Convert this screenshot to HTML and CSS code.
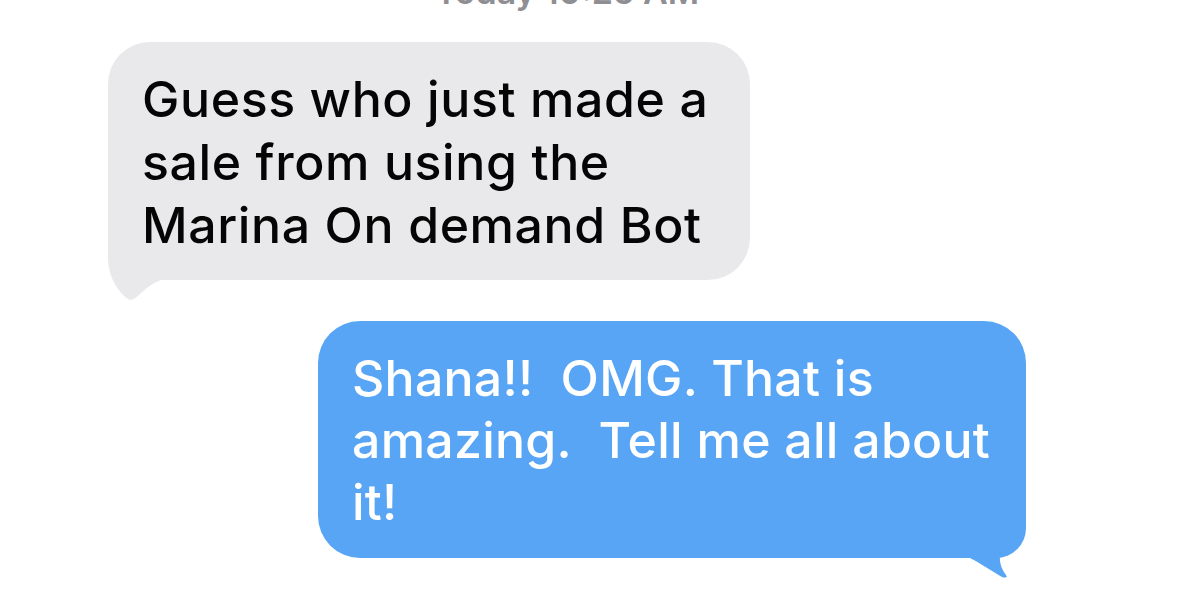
FILE: index.html
```html
<!DOCTYPE html>
<html>
<head>
<meta charset="utf-8">
<link rel="stylesheet" href="styles.css">
</head>
<body>
<div class="thread">
  <div class="stamp">Today 10:25 AM</div>
  <div class="bubble in">
    <svg class="tail tail-in" width="70" height="82" viewBox="0 0 70 82"><path d="M0 8 L0 38 C1 56 10 70 20 77 C23 79 26 77 30 74 C38 66 46 60 58 56 L58 8 Z" fill="#e9e9eb"/></svg>
    <p class="text">Guess who just made a<br>sale from using the<br>Marina On demand Bot</p>
  </div>
  <div class="bubble out">
    <svg class="tail tail-out" width="72" height="80" viewBox="0 0 72 80"><path d="M68 0 L68 22 C68 36 58 43 47 47 C40 51 40 64 48 74 C50 77 47 77 44 76 C34 70 22 62 12 57 L12 0 Z" fill="#57a5f4"/></svg>
    <p class="text">Shana!!  OMG. That is<br>amazing.  Tell me all about<br>it!</p>
  </div>
</div>
</body>
</html>
```
FILE: styles.css
```css
html, body {
  margin: 0;
  padding: 0;
  background: #ffffff;
}
body {
  width: 1200px;
  height: 597px;
  overflow: hidden;
  font-family: Inter, "Liberation Sans", Arial, sans-serif;
}
.thread {
  display: flex;
  flex-direction: column;
  align-items: flex-start;
}
.stamp {
  align-self: stretch;
  text-align: center;
  font-size: 34px;
  line-height: 34px;
  font-weight: 600;
  color: #8e8e93;
  margin-top: -25px;
  padding-right: 66px;
  height: 34px;
}
.bubble {
  position: relative;
  box-sizing: border-box;
  border-radius: 42px;
  padding: 26px 0 0 34px;
}
.bubble.in {
  background: #e9e9eb;
  color: #050505;
  margin: 33px 0 0 108px;
  width: 642px;
  height: 238px;
}
.bubble.out {
  background: #57a5f4;
  color: #ffffff;
  margin: 41px 0 0 318px;
  width: 708px;
  height: 237px;
  border-bottom-right-radius: 30px;
}
.text {
  position: relative;
  z-index: 1;
  margin: 0;
  font-size: 50px;
  line-height: 63px;
  font-weight: 500;
  white-space: pre;
  letter-spacing: 0.6px;
}
.bubble.out .text {
  line-height: 62px;
  letter-spacing: 0.25px;
}
.tail {
  position: absolute;
  display: block;
  z-index: 0;
}
.tail-in {
  left: 0;
  top: 180px;
}
.tail-out {
  left: 640px;
  top: 180px;
}
```
